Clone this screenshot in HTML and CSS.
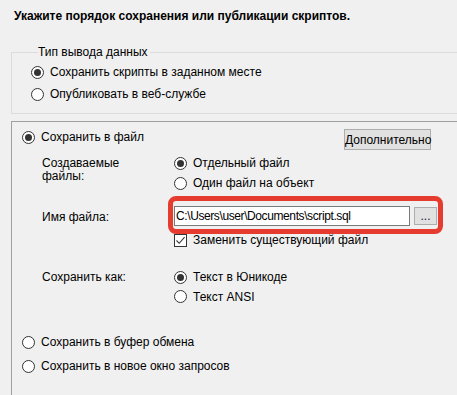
FILE: index.html
```html
<!DOCTYPE html>
<html lang="ru">
<head>
  <meta charset="UTF-8" />
  <title>Параметры сохранения скриптов</title>
  <link rel="stylesheet" href="styles.css">
</head>
<body>
  <div class="wizard">
    <h1 class="title">Укажите порядок сохранения или публикации скриптов.</h1>

    <fieldset class="output-type">
      <legend>Тип вывода данных</legend>
      <label class="option"><span class="radio checked"></span>Сохранить скрипты в заданном месте</label>
      <label class="option"><span class="radio"></span>Опубликовать в веб-службе</label>
    </fieldset>

    <div class="save-panel">
      <div class="panel-head">
        <label class="option"><span class="radio checked"></span>Сохранить в файл</label>
        <button class="btn">Дополнительно</button>
      </div>

      <div class="field files">
        <div class="field-label">Создаваемые<br>файлы:</div>
        <div class="choices">
          <label class="option row20"><span class="radio checked"></span>Отдельный файл</label>
          <label class="option row20"><span class="radio"></span>Один файл на объект</label>
        </div>
      </div>

      <div class="field filename">
        <div class="field-label">Имя файла:</div>
        <div class="choices">
          <div class="path-row">
            <input class="path" type="text" value="C:\Users\user\Documents\script.sql">
            <button class="btn browse">...</button>
            <span class="highlight"></span>
          </div>
          <label class="option check-row">
            <span class="checkbox">
              <svg width="11" height="11" viewBox="0 0 11 11"><path d="M1.5 5.5 L4.2 8.3 L9.6 2.2" fill="none" stroke="#333" stroke-width="1.1"/></svg>
            </span>Заменить существующий файл
          </label>
        </div>
      </div>

      <div class="field encoding">
        <div class="field-label">Сохранить как:</div>
        <div class="choices">
          <label class="option row20"><span class="radio checked"></span>Текст в Юникоде</label>
          <label class="option row19"><span class="radio"></span>Текст ANSI</label>
        </div>
      </div>

      <div class="targets">
        <label class="option row24"><span class="radio"></span>Сохранить в буфер обмена</label>
        <label class="option row24"><span class="radio"></span>Сохранить в новое окно запросов</label>
      </div>
    </div>
  </div>
</body>
</html>
```

FILE: styles.css
```css
body {
  margin: 0;
  background: #f0f0f0;
  font-family: 'Liberation Sans', Arial, sans-serif;
  font-size: 12px;
  color: #000;
  overflow: hidden;
}

.wizard {
  height: 395px;
  overflow: hidden;
}

.title {
  margin: 0;
  padding: 8px 0 0 14px;
  font-size: 12px;
  line-height: 16px;
  font-weight: bold;
}

.option {
  display: flex;
  align-items: center;
  gap: 6px;
  height: 22px;
  white-space: nowrap;
}

.radio {
  width: 11px;
  height: 11px;
  border: 1px solid #333;
  border-radius: 50%;
  background: #fff;
  display: flex;
  align-items: center;
  justify-content: center;
  flex: none;
}

.radio.checked::after {
  content: '';
  width: 7px;
  height: 7px;
  border-radius: 50%;
  background: #333;
}

.checkbox {
  width: 11px;
  height: 11px;
  border: 1px solid #333;
  background: #fff;
  display: flex;
  flex: none;
}

/* group box */
.output-type {
  margin: 20px -20px 0 11px;
  padding: 1px 0 8px 19px;
  border: 1px solid #dcdcdc;
  min-width: 0;
}

.output-type legend {
  margin-left: 7px;
  padding: 0 2px 0 0;
  line-height: 16px;
}

/* save panel */
.save-panel {
  margin: 7px 0 0 11px;
  border-top: 1px solid #a0a0a0;
  border-left: 1px solid #a0a0a0;
  height: 274px;
}

.panel-head {
  display: flex;
  justify-content: space-between;
  align-items: flex-start;
  padding: 7px 26px 0 10px;
}

.panel-head .option {
  height: 16px;
}

.btn {
  font-family: inherit;
  font-size: 12px;
  background: #e1e1e1;
  border: 1px solid #adadad;
  color: #000;
  padding: 0;
  margin: 0;
}

.panel-head .btn {
  width: 87px;
  height: 21px;
}

.field {
  display: grid;
  grid-template-columns: 132px 1fr;
  padding-left: 30px;
}

.field-label {
  line-height: 13px;
}

.files {
  margin-top: 3px;
}

.files .field-label {
  padding-top: 4px;
}

.row20 { height: 20px; }
.row19 { height: 19px; }
.row24 { height: 24px; }

.filename {
  margin-top: 13px;
}

.filename .field-label {
  padding-top: 5px;
}

.path-row {
  position: relative;
  display: flex;
  align-items: center;
  width: 263px;
  height: 20px;
}

.path {
  width: 236px;
  height: 20px;
  box-sizing: border-box;
  border: 1px solid #7a7a7a;
  background: #fff;
  font-family: inherit;
  font-size: 12px;
  letter-spacing: -0.4px;
  padding: 0 1px;
  margin: 0 4px 0 0;
  color: #000;
}

.browse {
  width: 23px;
  height: 18px;
  line-height: 12px;
  color: #2c0e40;
}

.highlight {
  position: absolute;
  left: -6px;
  top: -10px;
  width: 265px;
  height: 28px;
  border: 5px solid #e53c2f;
  border-radius: 8px;
  pointer-events: none;
}

.check-row {
  margin-top: 6px;
  height: 16px;
}

.encoding {
  margin-top: 19px;
}

.encoding .field-label {
  padding-top: 4px;
}

.targets {
  margin-top: 24px;
  padding-left: 10px;
}
```
